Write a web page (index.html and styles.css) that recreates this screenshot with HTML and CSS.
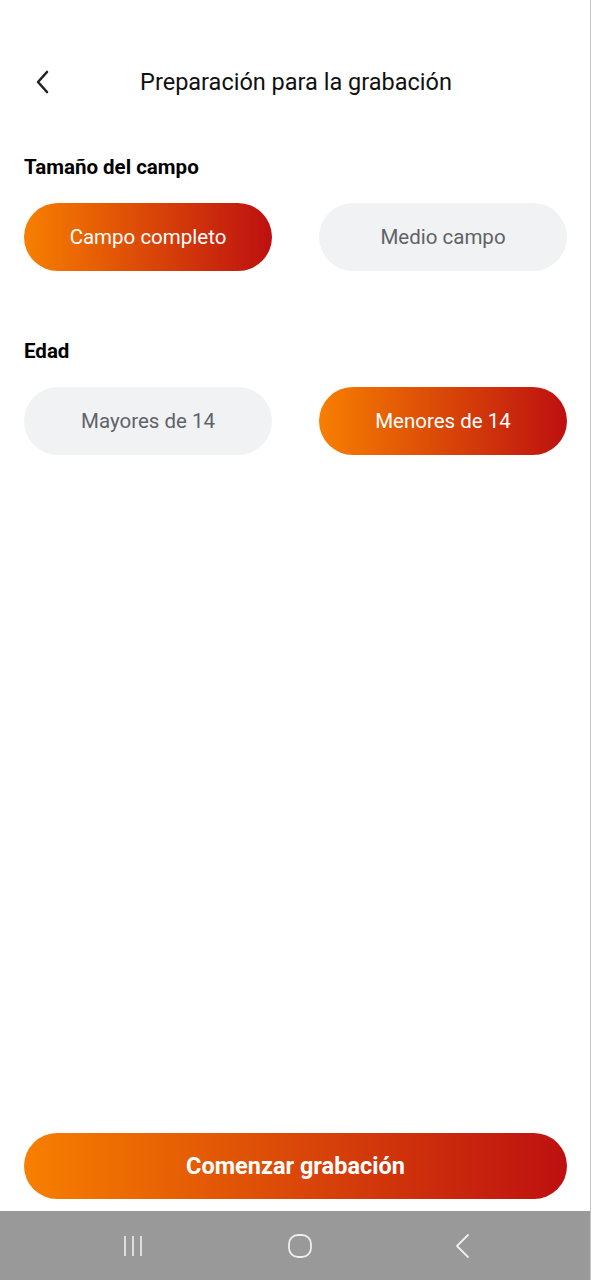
FILE: index.html
```html
<!DOCTYPE html>
<html lang="es">
<head>
<meta charset="utf-8">
<title>Preparación para la grabación</title>
<link rel="stylesheet" href="styles.css">
</head>
<body>
<div class="app">
  <header class="topbar">
    <button class="back" aria-label="Atrás">
      <svg width="18" height="24" viewBox="0 0 18 24"><path d="M13 2 L4 12 L13 22" fill="none" stroke="#222" stroke-width="2.6" stroke-linecap="round" stroke-linejoin="round"/></svg>
    </button>
    <h1 class="title">Preparación para la grabación</h1>
  </header>

  <main class="content">
    <section class="group">
      <h2 class="label">Tamaño del campo</h2>
      <div class="options">
        <button class="opt active">Campo completo</button>
        <button class="opt">Medio campo</button>
      </div>
    </section>
    <section class="group">
      <h2 class="label">Edad</h2>
      <div class="options">
        <button class="opt">Mayores de 14</button>
        <button class="opt active">Menores de 14</button>
      </div>
    </section>
  </main>

  <div class="footer">
    <button class="start">Comenzar grabación</button>
  </div>

  <nav class="sysnav">
    <svg width="24" height="24" viewBox="0 0 24 24"><path d="M4 2v20M12 2v20M20 2v20" stroke="#eee" stroke-width="1.6" fill="none"/></svg>
    <svg width="26" height="26" viewBox="0 0 26 26"><rect x="2" y="2" width="22" height="22" rx="9" fill="none" stroke="#eee" stroke-width="1.8"/></svg>
    <svg width="18" height="26" viewBox="0 0 18 26"><path d="M14 2 L3 13 L14 24" fill="none" stroke="#eee" stroke-width="1.8" stroke-linecap="round" stroke-linejoin="round"/></svg>
  </nav>
</div>
</body>
</html>
```
FILE: styles.css
```css
* { box-sizing: border-box; }
html, body { margin: 0; padding: 0; background: #fff; }
body { font-family: Roboto, "Noto Sans", sans-serif; color: #111; }
.app {
  width: 591px;
  height: 1280px;
  display: flex;
  flex-direction: column;
  border-right: 1px solid #c8c8c8;
  background: #fff;
}
.topbar {
  height: 164px;
  padding-top: 62px;
  display: flex;
  align-items: flex-start;
  position: relative;
}
.back {
  position: absolute;
  left: 34px;
  top: 70px;
  background: none;
  border: 0;
  padding: 0;
  width: 18px;
  height: 24px;
}
.title {
  margin: 0;
  width: 100%;
  text-align: center;
  font-size: 23.5px;
  font-weight: 400;
  line-height: 40px;
  color: #111;
  padding-left: 2px;
}
.content {
  flex: 1;
  padding: 0 23px 0 24px;
}
.group { margin-bottom: 77px; }
.label {
  margin: -14px 0 0;
  font-size: 20.5px;
  font-weight: 700;
  line-height: 34px;
  height: 34px;
  color: #000;
}
.options {
  display: flex;
  justify-content: space-between;
  margin-top: 19px;
}
.opt {
  width: 248px;
  height: 68px;
  border-radius: 34px;
  border: 0;
  background: #f1f2f4;
  color: #5f6368;
  font-family: Roboto, "Noto Sans", sans-serif;
  font-size: 20.5px;
  font-weight: 400;
}
.opt.active {
  background: linear-gradient(90deg, #f77f00 0%, #bd1010 100%);
  color: #fff;
}
.footer {
  padding: 0 23px 12px 24px;
}
.start {
  width: 543px;
  height: 66px;
  border-radius: 33px;
  border: 0;
  background: linear-gradient(90deg, #f77f00 0%, #bd1010 100%);
  color: #fff;
  font-family: Roboto, "Noto Sans", sans-serif;
  font-size: 23.5px;
  font-weight: 700;
}
.sysnav {
  height: 69px;
  background: #999;
  display: flex;
  align-items: center;
  justify-content: space-between;
  padding: 0 118px 0 121px;
}
```
